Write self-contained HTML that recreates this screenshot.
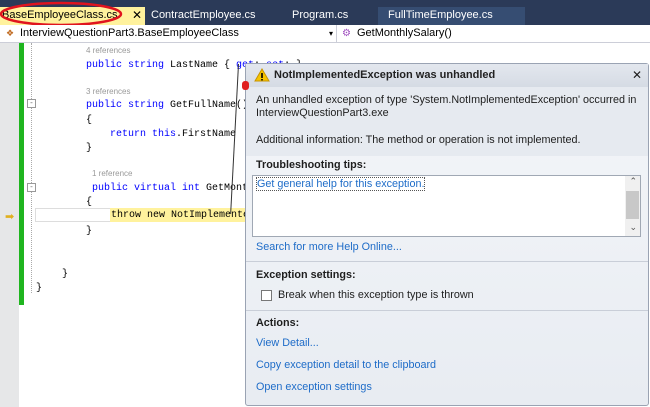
<!DOCTYPE html>
<html><head><style>
*{margin:0;padding:0;box-sizing:border-box}
body{width:650px;height:407px;overflow:hidden;background:#fff;position:relative;font-family:"Liberation Sans",sans-serif}
.abs{position:absolute}
.tabs{left:0;top:0;width:650px;height:25px;background:#2b3a58}
.tab{position:absolute;top:7px;height:18px;font-size:11px;color:#fff;line-height:17px}
.nav{left:0;top:25px;width:650px;height:18px;background:#fff;border-bottom:1px solid #ccced8;font-size:11px;line-height:17px;color:#000}
.c{position:absolute;font-family:"Liberation Mono",monospace;font-size:10px;white-space:pre;line-height:14px;color:#000}
.kw{color:#0000ff}
.ref{position:absolute;font-size:8px;color:#999;line-height:10px}
.pop{left:245px;top:63px;width:404px;height:343px;border:1px solid #9aa3b3;border-radius:3px;background:linear-gradient(#f4f6f9,#e8ecf2);font-size:10.8px;color:#1e1e1e}
.lnk{color:#1e6cc8}
.sep{position:absolute;left:0;width:402px;height:1px;background:#c9ced8}
</style></head><body>
<div class="abs tabs">
  <div class="tab" style="left:0;width:145px;background:#fff29d;color:#000;padding-left:2px">BaseEmployeeClass.cs<span style="position:absolute;left:132px;top:0;font-size:12px">✕</span></div>
  <div class="tab" style="left:151px">ContractEmployee.cs</div>
  <div class="tab" style="left:292px">Program.cs</div>
  <div class="tab" style="left:378px;width:147px;background:#364d72;padding-left:10px">FullTimeEmployee.cs</div>
  <svg class="abs" style="left:0;top:0" width="130" height="27"><ellipse cx="61" cy="14" rx="60" ry="11" fill="none" stroke="#e0141e" stroke-width="2.5"/></svg>
</div>
<div class="abs nav">
  <span style="position:absolute;left:6px;top:4px;width:10px;height:9px;color:#c06a20;font-size:9px;line-height:9px">❖</span>
  <span style="position:absolute;left:20px">InterviewQuestionPart3.BaseEmployeeClass</span>
  <span style="position:absolute;left:329px;top:0;font-size:8px">▾</span>
  <div style="position:absolute;left:336px;top:0;width:1px;height:18px;background:#ccced8"></div>
  <span style="position:absolute;left:342px;color:#a050c0;font-size:10px">⚙</span>
  <span style="position:absolute;left:357px">GetMonthlySalary()</span>
</div>
<div class="abs" style="left:0;top:43px;width:19px;height:364px;background:#e6e7e8"></div>
<div class="abs" style="left:19px;top:43px;width:5px;height:262px;background:#1fb51f"></div>
<div class="abs" style="left:31px;top:43px;width:1px;height:250px;border-left:1px dotted #aaa"></div>
<div class="abs" style="left:27px;top:99px;width:9px;height:9px;border:1px solid #999;background:#fff;font-size:8px;line-height:6px;text-align:center;color:#666">-</div>
<div class="abs" style="left:27px;top:183px;width:9px;height:9px;border:1px solid #999;background:#fff;font-size:8px;line-height:6px;text-align:center;color:#666">-</div>
<div class="abs" style="left:5px;top:210px;color:#e0b020;font-size:11px">➡</div>
<div class="abs" style="left:35px;top:208px;width:210px;height:14px;border:1px solid #ddd"></div>
<div class="abs" style="left:110px;top:208px;width:135px;height:14px;background:#fff29d"></div>
<div class="ref" style="left:86px;top:46px">4 references</div>
<div class="c" style="left:86px;top:59px"><span class="kw">public string</span> LastName { <span class="kw">get</span>; <span class="kw">set</span>; }</div>
<div class="ref" style="left:86px;top:87px">3 references</div>
<div class="c" style="left:86px;top:99px"><span class="kw">public string</span> GetFullName()</div>
<div class="c" style="left:86px;top:114px">{</div>
<div class="c" style="left:110px;top:128px"><span class="kw">return this</span>.FirstName</div>
<div class="c" style="left:86px;top:142px">}</div>
<div class="ref" style="left:92px;top:169px">1 reference</div>
<div class="c" style="left:92px;top:182px"><span class="kw">public virtual int</span> GetMonthlySalary()</div>
<div class="c" style="left:86px;top:196px">{</div>
<div class="c" style="left:111px;top:209px">throw new NotImplementedException();</div>
<div class="c" style="left:86px;top:225px">}</div>
<div class="c" style="left:62px;top:268px">}</div>
<div class="c" style="left:36px;top:282px">}</div>
<div class="abs pop">
  <div style="position:absolute;left:0;top:0;width:402px;height:92px;background:#e6eaf0"></div>
  <div style="position:absolute;left:0;top:0;width:402px;height:23px;background:linear-gradient(#e3e7ee,#d5dbe4)"></div>
  <svg class="abs" style="left:8px;top:4px" width="16" height="14"><path d="M8 1L15 13H1Z" fill="#f5c400" stroke="#c89400"/><rect x="7.2" y="5" width="1.6" height="5" fill="#000"/><rect x="7.2" y="11" width="1.6" height="1.4" fill="#000"/></svg>
  <div class="abs" style="left:28px;top:5px;font-weight:bold;font-size:11px;color:#222">NotImplementedException was unhandled</div>
  <div class="abs" style="left:386px;top:4px;font-size:12px">✕</div>
  <div class="abs" style="left:-4px;top:17px;width:7px;height:9px;background:#e02020;border-radius:3px"></div>
  <div class="abs" style="left:10px;top:30px;line-height:13px">An unhandled exception of type 'System.NotImplementedException' occurred in<br>InterviewQuestionPart3.exe</div>
  <div class="abs" style="left:10px;top:70px">Additional information: The method or operation is not implemented.</div>
  <div class="abs" style="left:10px;top:95px;font-weight:bold">Troubleshooting tips:</div>
  <div class="abs" style="left:6px;top:111px;width:389px;height:62px;background:#fff;border:1px solid #a0a8b4">
    <span class="lnk" style="position:absolute;left:3px;top:1px;border:1px dotted #555">Get general help for this exception.</span>
    <div style="position:absolute;right:0;top:0;width:15px;height:60px;background:#f0f0f0"></div>
    <div style="position:absolute;right:1px;top:15px;width:13px;height:28px;background:#c8c8c8"></div>
    <span style="position:absolute;right:3px;top:0;font-size:9px;color:#555">⌃</span>
    <span style="position:absolute;right:3px;top:46px;font-size:9px;color:#555">⌄</span>
  </div>
  <div class="abs lnk" style="left:10px;top:177px">Search for more Help Online...</div>
  <div class="sep" style="top:197px"></div>
  <div class="abs" style="left:10px;top:205px;font-weight:bold">Exception settings:</div>
  <div class="abs" style="left:15px;top:226px;width:11px;height:11px;border:1px solid #777;background:#fff"></div>
  <div class="abs" style="left:32px;top:225px">Break when this exception type is thrown</div>
  <div class="sep" style="top:246px"></div>
  <div class="abs" style="left:10px;top:253px;font-weight:bold">Actions:</div>
  <div class="abs lnk" style="left:10px;top:273px">View Detail...</div>
  <div class="abs lnk" style="left:10px;top:295px">Copy exception detail to the clipboard</div>
  <div class="abs lnk" style="left:10px;top:317px">Open exception settings</div>
</div>
<div class="abs" style="left:238px;top:64px;width:1px;height:150px;background:#333;transform:rotate(3deg);transform-origin:top"></div>
</body></html>
